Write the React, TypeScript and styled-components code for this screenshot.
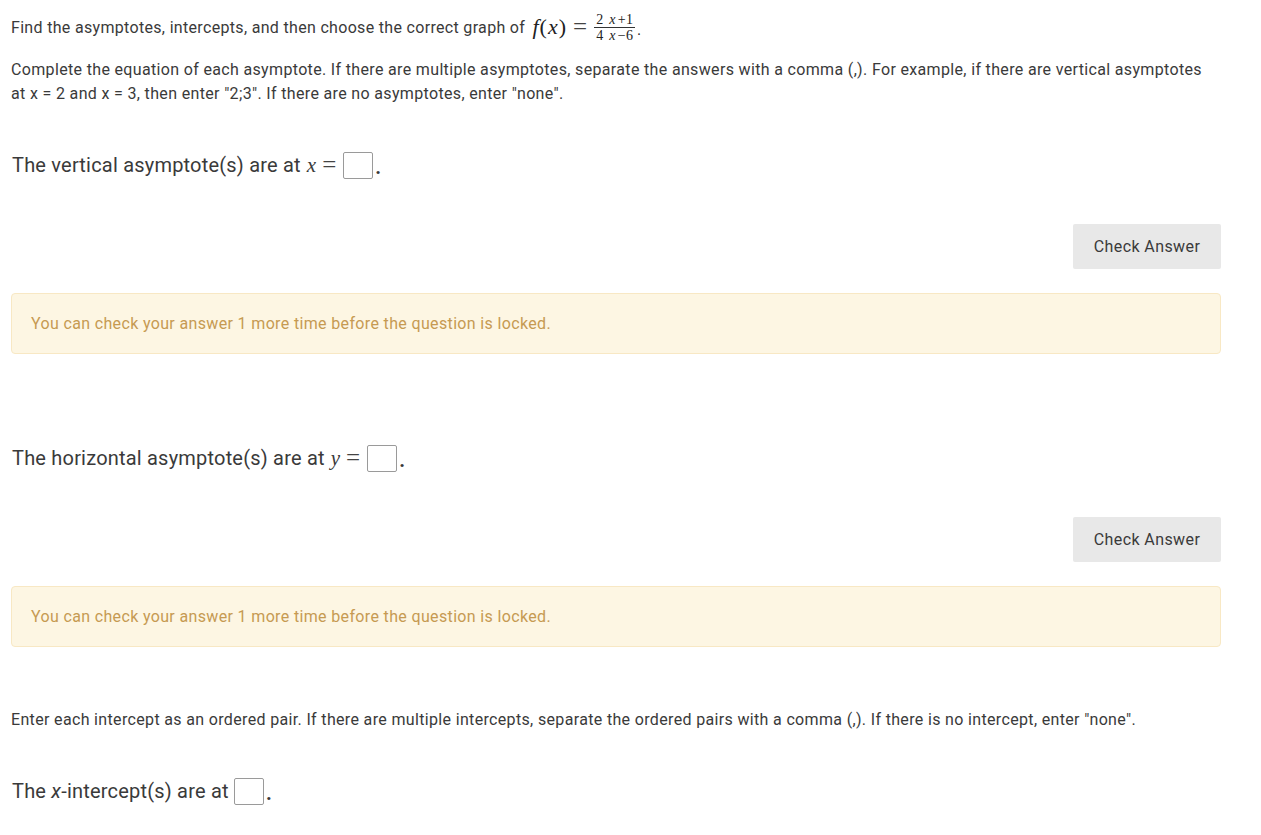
import React from 'react';
import styled, { createGlobalStyle } from 'styled-components';

const GlobalStyle = createGlobalStyle`
  body {
    margin: 0;
    background: #ffffff;
    font-family: Roboto, "Liberation Sans", sans-serif;
    color: #3a3a3a;
  }
`;

type Question = {
  lead: React.ReactNode;
  variable?: string;
};

function AnswerBlock({ lead, variable }: Question): React.ReactElement {
  return (
    <>
      <QuestionLine>
        <span>{lead}</span>
        {variable && (
          <>
            <MathVar>{variable}</MathVar>
            <MathOp>=</MathOp>
          </>
        )}
        <AnswerBox aria-label="answer" />
        <Dot>.</Dot>
      </QuestionLine>
      <ButtonRow>
        <CheckButton>Check Answer</CheckButton>
      </ButtonRow>
      <Warning>You can check your answer 1 more time before the question is locked.</Warning>
    </>
  );
}

function App(): React.ReactElement {
  return (
    <>
      <GlobalStyle />
      <Page>
        <Intro>
          <span>Find the asymptotes, intercepts, and then choose the correct graph of&nbsp;</span>
          <MathExpr>
            <MathVar>f</MathVar>
            <MathParen>(</MathParen>
            <MathVar $tight>x</MathVar>
            <MathParen>)</MathParen>
            <MathOp>=</MathOp>
            <Fraction>
              <FracPart>
                2 <i>x</i>+1
              </FracPart>
              <FracPart $bottom>
                4 <i>x</i>−6
              </FracPart>
            </Fraction>
            <SmallDot>.</SmallDot>
          </MathExpr>
        </Intro>
        <Instructions $gap={11}>
          Complete the equation of each asymptote. If there are multiple asymptotes, separate the answers with a comma (,). For example, if there are vertical asymptotes at x = 2 and x = 3, then enter "2;3". If there are no asymptotes, enter "none".
        </Instructions>

        <Section $gap={44}>
          <AnswerBlock lead="The vertical asymptote(s) are at" variable="x" />
        </Section>

        <Section $gap={89}>
          <AnswerBlock lead="The horizontal asymptote(s) are at" variable="y" />
        </Section>

        <Instructions $gap={61}>
          Enter each intercept as an ordered pair. If there are multiple intercepts, separate the ordered pairs with a comma (,). If there is no intercept, enter "none".
        </Instructions>

        <Section $gap={44}>
          <QuestionLine>
            <span>
              The <i>x</i>-intercept(s) are at&nbsp;
            </span>
            <AnswerBox aria-label="answer" />
            <Dot>.</Dot>
          </QuestionLine>
        </Section>
      </Page>
    </>
  );
}

export default App;

const Page = styled.div`
  width: 1210px;
  padding: 0 11px 40px;
`;

const Intro = styled.div`
  display: flex;
  align-items: center;
  height: 40px;
  margin-top: 7px;
  font-size: 16px;
  letter-spacing: 0.32px;
`;

const MathExpr = styled.span`
  display: inline-flex;
  align-items: center;
  font-family: "Liberation Serif", "DejaVu Serif", serif;
  letter-spacing: 0;
  color: #222;
`;

const MathVar = styled.i<{ $tight?: boolean }>`
  font-family: "Liberation Serif", "DejaVu Serif", serif;
  font-size: 22px;
  font-style: italic;
  margin-left: ${(p) => (p.$tight ? 0 : 3)}px;
  letter-spacing: 0;
`;

const MathParen = styled.span`
  font-family: "Liberation Serif", serif;
  font-size: 22px;
  margin: 0 1px;
`;

const MathOp = styled.span`
  font-family: "Liberation Serif", serif;
  font-size: 25px;
  margin: 0 7px 0 6px;
  color: #444;
  letter-spacing: 0;
`;

const Fraction = styled.span`
  display: inline-flex;
  flex-direction: column;
  align-items: center;
  font-family: "Liberation Serif", serif;
  font-size: 14px;
  line-height: 15px;
  letter-spacing: 0.3px;
`;

const FracPart = styled.span<{ $bottom?: boolean }>`
  padding: 0 2px;
  ${(p) => (p.$bottom ? 'border-top: 1px solid #333;' : '')}
  i {
    margin: 0 2px;
  }
`;

const SmallDot = styled.span`
  font-size: 14px;
  align-self: flex-end;
  margin: 0 0 4px 2px;
`;

const Instructions = styled.p<{ $gap: number }>`
  margin: ${(p) => p.$gap}px 0 0;
  padding-right: 8px;
  font-size: 16px;
  letter-spacing: 0.34px;
  line-height: 24px;
`;

const Section = styled.section<{ $gap: number }>`
  margin-top: ${(p) => p.$gap}px;
`;

const QuestionLine = styled.div`
  display: flex;
  align-items: center;
  height: 30px;
  padding-left: 1px;
  font-size: 20px;
  letter-spacing: 0.2px;

  ${MathVar} {
    font-size: 21px;
    margin-left: 6px;
  }
  ${MathOp} {
    font-size: 25px;
    margin: 0 7px 0 6px;
  }
`;

const AnswerBox = styled.span`
  display: inline-block;
  width: 28px;
  height: 25px;
  border: 1px solid #9a9a9a;
  border-radius: 2px;
  background: #fff;
`;

const Dot = styled.span`
  font-size: 20px;
  font-weight: 700;
  margin-left: 2px;
  align-self: flex-end;
  line-height: 26px;
`;

const ButtonRow = styled.div`
  display: flex;
  justify-content: flex-end;
  margin-top: 44px;
`;

const CheckButton = styled.button`
  width: 148px;
  height: 45px;
  border: none;
  border-radius: 2px;
  background: #e8e8e8;
  color: #3a3a3a;
  font-family: Roboto, "Liberation Sans", sans-serif;
  font-size: 16px;
  letter-spacing: 0.4px;
  cursor: pointer;
`;

const Warning = styled.div`
  margin-top: 24px;
  height: 61px;
  box-sizing: border-box;
  display: flex;
  align-items: center;
  padding: 0 19px;
  background: #fdf6e3;
  border: 1px solid #f8e8c4;
  border-radius: 4px;
  color: #c69a52;
  font-size: 16px;
  letter-spacing: 0.35px;
`;
